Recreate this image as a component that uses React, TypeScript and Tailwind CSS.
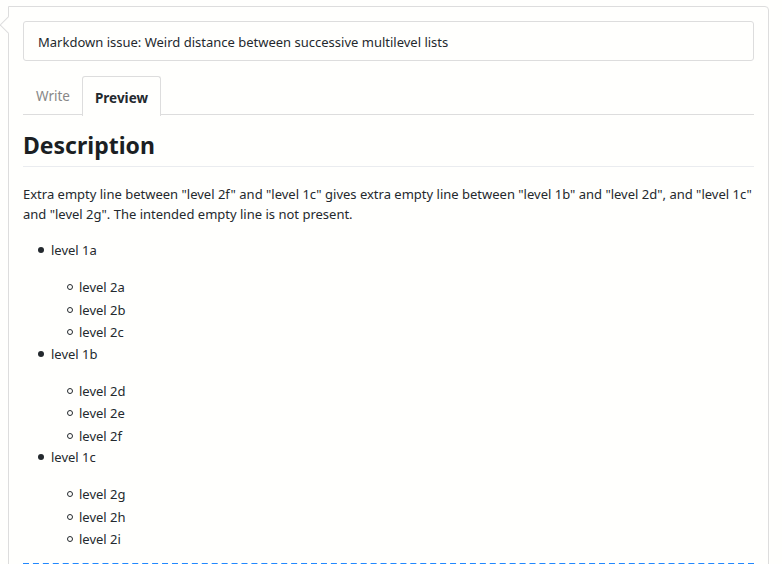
import React from "react";

const groups = [
  { top: "level 1a", subs: ["level 2a", "level 2b", "level 2c"] },
  { top: "level 1b", subs: ["level 2d", "level 2e", "level 2f"] },
  { top: "level 1c", subs: ["level 2g", "level 2h", "level 2i"] },
];

export default function App() {
  return (
    <div
      className="w-[782px] h-[564px] overflow-hidden bg-[#fffffd] text-[#24292e]"
      style={{ fontFamily: '"Noto Sans", "Open Sans", sans-serif' }}
    >
      <div className="relative ml-[8px] mt-[6px] w-[761px] border border-[#dddddd] rounded-tr-[4px] bg-[#fffffd] px-[14px] pt-[14px] h-[600px]">
        {/* pointer */}
        <div className="absolute left-[-7px] top-[12px] w-[12px] h-[12px] rotate-45 border-l border-b border-[#dddddd] bg-[#fffffd]" />

        <div className="h-[40px] border border-[#dddddd] rounded-[3px] flex items-center px-[14px] pt-[3px] text-[13px] text-[#24292e]">
          Markdown issue: Weird distance between successive multilevel lists
        </div>

        <div className="mt-[15px] flex border-b border-[#dddddd] h-[39px] text-[13.5px]">
          <div className="pl-[13px] pr-[12px] pt-[3px] flex items-center text-[#888888]">Write</div>
          <div className="px-[12px] pt-[3px] flex items-center font-bold text-[#24292e] border border-[#dddddd] border-b-0 rounded-t-[3px] bg-[#fffffd] mb-[-1px] h-[40px]">
            Preview
          </div>
        </div>

        <h1 className="mt-[15px] text-[23px] font-bold leading-[30px] pb-[6px] border-b border-[#eaecef] text-[#1b1f23]">
          Description
        </h1>

        <p className="mt-[17px] text-[13px] leading-[20px]">
          Extra empty line between "level 2f" and "level 1c" gives extra empty line between "level 1b" and "level 2d", and "level 1c" and "level 2g". The intended empty line is not present.
        </p>

        <ul className="mt-[16px] text-[13px] leading-[20px]">
          {groups.map((g) => (
            <li key={g.top} className="pl-[28px]">
              <div className="flex items-center">
                <span className="w-[6px] h-[6px] rounded-full bg-[#24292e] mr-[7px] ml-[-13px]" />
                <span>{g.top}</span>
              </div>
              <ul className="mt-[16px] pl-[28px]">
                {g.subs.map((s) => (
                  <li key={s} className="flex items-center h-[22.5px]">
                    <span className="w-[6px] h-[6px] rounded-full border border-[#24292e] mr-[6px] ml-[-12px]" />
                    <span>{s}</span>
                  </li>
                ))}
              </ul>
            </li>
          ))}
        </ul>

        <div className="mt-[12px] border-t-2 border-dashed border-[#2188ff]" />
      </div>
    </div>
  );
}
